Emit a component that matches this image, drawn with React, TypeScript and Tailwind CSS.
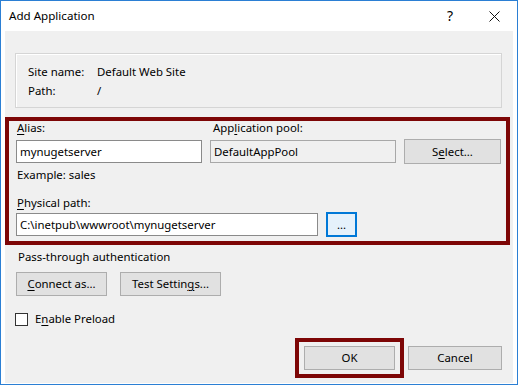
import React from 'react';

const U: React.FC<{ children: React.ReactNode }> = ({ children }) => (
  <span className="underline underline-offset-[2px] decoration-[1px]">{children}</span>
);

const Button: React.FC<{ className?: string; children: React.ReactNode }> = ({ className = '', children }) => (
  <div className={`flex items-center justify-center shrink-0 bg-[#e1e1e1] border border-[#adadad] ${className}`}>
    {children}
  </div>
);

export default function App() {
  return (
    <div className="w-[518px] h-[385px] bg-white border border-[#2b7fd4] flex flex-col text-[11.4px] leading-[16px] text-black font-['Noto_Sans',sans-serif]">
      {/* title bar */}
      <div className="h-[30px] shrink-0 flex items-center pl-[8px]">
        <span className="text-[11.6px]">Add Application</span>
        <span className="ml-auto mr-[36px] text-[14px] leading-[14px]">?</span>
        <svg width="11" height="11" viewBox="0 0 11 11" className="mr-[17px]">
          <path d="M0.5 0.5 L10.5 10.5 M10.5 0.5 L0.5 10.5" stroke="#111" strokeWidth="1" />
        </svg>
      </div>

      <div className="flex-1 mx-[4px] mb-[1px] bg-[#f0f0f0] flex flex-col">
        {/* site info */}
        <div className="mt-[22px] ml-[10px] w-[487px] h-[55px] shrink-0 border border-[#d5d5d5] shadow-[inset_1px_1px_0_#ffffff] pl-[12px] pt-[10px]">
          <div className="grid grid-cols-[69px_1fr] gap-y-[3px]">
            <span>Site name:</span>
            <span>Default Web Site</span>
            <span>Path:</span>
            <span>/</span>
          </div>
        </div>

        {/* highlighted application block */}
        <div className="mt-[9px] w-[505px] h-[128px] shrink-0 border-[4px] border-[#7d0606] pl-[7px] flex flex-col">
          <div className="flex">
            <div className="flex flex-col w-[186px]">
              <span className="pl-[1px] leading-[14px]"><U>A</U>lias:</span>
              <div className="mt-[5px] h-[23px] bg-white border border-[#8a8a8a] flex items-center pl-[3px]">
                mynugetserver
              </div>
            </div>
            <div className="flex flex-col w-[186px] ml-[8px]">
              <span className="pl-[3px] leading-[14px]">App<U>l</U>ication pool:</span>
              <div className="mt-[5px] h-[23px] bg-[#f0f0f0] border border-[#a8a8a8] flex items-center pl-[3px]">
                DefaultAppPool
              </div>
            </div>
            <Button className="ml-[8px] mt-[18px] w-[97px] h-[25px]">
              S<U>e</U>lect...
            </Button>
          </div>
          <span className="mt-[3px] pl-[1px]">Example: sales</span>
          <span className="mt-[12px] pl-[1px]"><U>P</U>hysical path:</span>
          <div className="mt-[1px] flex items-center h-[25px]">
            <div className="w-[302px] h-[23px] bg-white border border-[#8a8a8a] flex items-center pl-[3px]">
              C:\inetpub\wwwroot\mynugetserver
            </div>
            <div className="ml-[8px] w-[31px] h-[25px] bg-[#e5f1fb] border-[2px] border-[#0078d7] flex items-center justify-center leading-[10px]">
              ...
            </div>
          </div>
        </div>

        <span className="mt-[4px] ml-[13px]">Pass-through authentication</span>
        <div className="mt-[7px] ml-[11px] flex gap-[13px]">
          <Button className="w-[91px] h-[24px]"><U>C</U>onnect as...</Button>
          <Button className="w-[101px] h-[24px]">Test Settin<U>g</U>s...</Button>
        </div>

        <div className="mt-[15px] ml-[10px] flex items-center">
          <div className="w-[13px] h-[13px] bg-white border border-[#333333]" />
          <span className="ml-[7px]">E<U>n</U>able Preload</span>
        </div>

        <div className="mt-[11px] pr-[11px] flex justify-end items-center">
          <div className="w-[109px] h-[40px] border-[4px] border-[#7d0606] flex items-center justify-center">
            <Button className="w-[91px] h-[24px]">OK</Button>
          </div>
          <Button className="ml-[4px] w-[94px] h-[24px]">Cancel</Button>
        </div>
      </div>
    </div>
  );
}
